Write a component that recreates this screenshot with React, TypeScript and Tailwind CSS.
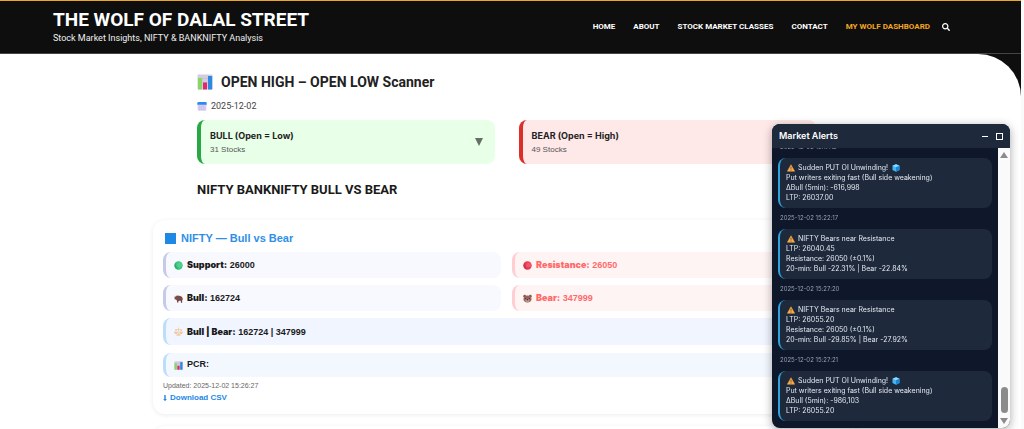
import type { ReactNode } from "react";
import { FaSearch } from "react-icons/fa";

const navLinks = ["Home", "About", "Stock Market Classes", "Contact"];

const alerts = [
  {
    time: "2025-12-02 15:17:12",
    title: "Sudden PUT OI Unwinding!",
    cube: true,
    lines: ["Put writers exiting fast (Bull side weakening)", "ΔBull (5min): -616,998", "LTP: 26037.00"],
  },
  {
    time: "2025-12-02 15:22:17",
    title: "NIFTY Bears near Resistance",
    cube: false,
    lines: ["LTP: 26040.45", "Resistance: 26050 (±0.1%)", "20-min: Bull -22.31% | Bear -22.84%"],
  },
  {
    time: "2025-12-02 15:27:20",
    title: "NIFTY Bears near Resistance",
    cube: false,
    lines: ["LTP: 26055.20", "Resistance: 26050 (±0.1%)", "20-min: Bull -29.85% | Bear -27.92%"],
  },
  {
    time: "2025-12-02 15:27:21",
    title: "Sudden PUT OI Unwinding!",
    cube: true,
    lines: ["Put writers exiting fast (Bull side weakening)", "ΔBull (5min): -986,103", "LTP: 26055.20"],
  },
];

function ChartIcon({ className }: { className: string }) {
  return (
    <svg viewBox="0 0 16 16" className={className} aria-hidden="true">
      <rect x="0.5" y="0.5" width="15" height="15" rx="1" fill="#d3cddb" />
      <path d="M1 4.5h14M1 8.5h14M1 12h14" stroke="#bdb5c9" strokeWidth="0.5" />
      <rect x="1" y="4" width="4" height="11.5" fill="#86d765" />
      <rect x="6" y="8.5" width="4" height="7" fill="#e3266f" />
      <rect x="11" y="2" width="4.2" height="13.5" fill="#2f88e0" />
    </svg>
  );
}

function CalendarIcon({ className }: { className: string }) {
  return (
    <svg viewBox="0 0 16 16" className={className} aria-hidden="true">
      <rect x="1" y="2" width="14" height="13.5" rx="1.5" fill="#d9d0f2" />
      <path d="M0.5 3.5a2 2 0 0 1 2-2h11a2 2 0 0 1 2 2V6H0.5z" fill="#2b8af0" />
      <path d="M3 8.5h10M3 11h10M3 13.5h10" stroke="#b9aee0" strokeWidth="1" strokeDasharray="2 1" />
    </svg>
  );
}

function BallIcon({ className }: { className: string }) {
  return (
    <svg viewBox="0 0 16 16" className={className} aria-hidden="true">
      <circle cx="8" cy="8" r="7.5" fill="currentColor" />
      <circle cx="10" cy="7" r="4.5" fill="#ffffff" opacity="0.15" />
      <path d="M2.500 3a7.500 7.500 0 0 0 6 12.400C5 13 3 9 2.500 3z" fill="#000000" opacity="0.15" />
    </svg>
  );
}

function BullIcon({ className }: { className: string }) {
  return (
    <svg viewBox="0 0 16 16" className={className} aria-hidden="true">
      <path
        d="M1 3.500l1 1.200L4.500 3l2-.5 4.500 1 3 1.500 1.500 3v3l-1-1v5h-2l-.5-3-4 .5-.3 2.500H6L5 11.500 4 10l-2.500-.5L.5 7 1.500 5.700z"
        fill="#7b4b48"
      />
      <path d="M6 11.500l.5 3.500H5.500zM14 11l.3 4H12z" fill="#5b3535" />
      <path d="M.6 3l1.600 1.500L4.500 3.500" fill="none" stroke="#c9b5a8" strokeWidth="0.8" />
    </svg>
  );
}

function BearIcon({ className }: { className: string }) {
  return (
    <svg viewBox="0 0 16 16" className={className} aria-hidden="true">
      <circle cx="3" cy="4" r="2.500" fill="#8a5a4c" />
      <circle cx="13" cy="4" r="2.500" fill="#8a5a4c" />
      <path d="M.8 9c0-4 3-6.500 7.200-6.500S15.200 5 15.200 9s-3 6-7.200 6S.8 13 .8 9z" fill="#94665a" />
      <ellipse cx="8" cy="11.500" rx="3.800" ry="3" fill="#bf9688" />
      <ellipse cx="8" cy="10" rx="1.600" ry="1" fill="#3a2430" />
      <circle cx="4.800" cy="8" r="0.900" fill="#3a2430" />
      <circle cx="11.200" cy="8" r="0.900" fill="#3a2430" />
    </svg>
  );
}

function ScalesIcon({ className }: { className: string }) {
  return (
    <svg viewBox="0 0 16 16" className={className} aria-hidden="true">
      <g fill="none" stroke="#f2bd86" strokeWidth="1">
        <path d="M8 1v12M2.500 4.500h11M3.500 4.500L1 10M3.500 4.500L6 10M12.500 4.500L10 10M12.500 4.500L15 10" />
      </g>
      <path
        d="M.5 9.500h6c0 2-1.300 2.800-3 2.800s-3-.8-3-2.800zM9.500 9.500h6c0 2-1.300 2.800-3 2.800s-3-.8-3-2.800zM4 15c0-1.500 2-2 4-2s4 .5 4 2z"
        fill="#f3bb80"
      />
    </svg>
  );
}

function WarningIcon({ className }: { className: string }) {
  return (
    <svg viewBox="0 0 16 16" className={className} aria-hidden="true">
      <path d="M8 1.500L15.300 14.500H.7z" fill="#f9ab44" stroke="#f9ab44" strokeWidth="1" strokeLinejoin="round" />
      <path d="M7.200 5.500h1.600l-.3 5h-1zM7.200 11.500h1.600V13H7.200z" fill="#4a3440" />
    </svg>
  );
}

function CubeIcon({ className }: { className: string }) {
  return (
    <svg viewBox="0 0 16 16" className={className} aria-hidden="true">
      <path d="M8 .5l7 3v8.500l-7 3.500-7-3.500V3.500z" fill="#45b4f5" />
      <path d="M8 .5l7 3-7 3-7-3z" fill="#8fdcff" />
      <path d="M8 6.500l7-3V12l-7 3.500z" fill="#1b86d8" />
    </svg>
  );
}

function ScannerCard({ title, count, className }: { title: string; count: string; className: string }) {
  return (
    <button
      type="button"
      aria-expanded="false"
      className={`flex min-w-0 flex-1 items-center justify-between rounded-lg border-l-4 py-2 pr-3 pl-[9px] text-left ${className}`}
    >
      <span className="flex flex-col">
        <span className="font-[Inter,sans-serif] text-[9px] leading-4 font-bold text-[#222]">{title}</span>
        <span className="font-['Liberation_Sans',sans-serif] text-[8px] leading-3 text-[#555]">{count}</span>
      </span>
      <svg viewBox="0 0 8 8" className="size-2 text-[#666f66]" aria-hidden="true">
        <path d="M0 0h8L4 8z" fill="currentColor" />
      </svg>
    </button>
  );
}

function StatRow({
  icon,
  label,
  value,
  className,
}: {
  icon: ReactNode;
  label: string;
  value: string;
  className: string;
}) {
  return (
    <div className={`flex items-center gap-1 rounded-lg border-l-3 px-2 text-[9px] leading-3 font-bold ${className}`}>
      {icon}
      <p>
        <span className="font-[Inter,sans-serif] font-black">{label}</span> {value}
      </p>
    </div>
  );
}

function Header() {
  return (
    <header className="flex items-center justify-between border-t border-b border-t-[#eba625] border-b-[#444] bg-[#0e0e0e] pt-2 pr-[71px] pb-2 pl-[53px] text-white">
      <div>
        <p className="text-[19px] leading-[22px] font-bold">THE WOLF OF DALAL STREET</p>
        <p className="text-[9px] leading-[14px] text-[#eee]">Stock Market Insights, NIFTY &amp; BANKNIFTY Analysis</p>
      </div>
      <nav className="flex items-center gap-[18px] text-[8px] leading-3 font-bold uppercase">
        {navLinks.map((link) => (
          <a key={link} href="#">
            {link}
          </a>
        ))}
        <a href="#" className="text-[#f5a623]">
          My Wolf Dashboard
        </a>
        <button type="button" aria-label="Search" className="-ml-[6px]">
          <FaSearch className="size-2" />
        </button>
      </nav>
    </header>
  );
}

function Scanner() {
  return (
    <section className="mx-auto max-w-[619px]">
      <h1 className="flex items-center gap-2 text-sm leading-5 font-bold text-[#222]">
        <ChartIcon className="size-4" />
        OPEN HIGH – OPEN LOW Scanner
      </h1>
      <p className="mt-2 flex items-center gap-1 text-[9px] leading-3 text-[#444]">
        <CalendarIcon className="size-[10px]" />
        2025-12-02
      </p>
      <div className="mt-2 flex gap-6">
        <ScannerCard title="BULL (Open = Low)" count="31 Stocks" className="border-[#28a745] bg-[#e8ffe8]" />
        <ScannerCard title="BEAR (Open = High)" count="49 Stocks" className="border-[#dc2f2a] bg-[#ffe8e8]" />
      </div>
      <h2 className="mt-4 text-[13px] leading-5 font-bold text-[#1a1a1a]">NIFTY BANKNIFTY BULL VS BEAR</h2>
    </section>
  );
}

function NiftyCard() {
  return (
    <section className="mx-auto mt-5 max-w-[707px] rounded-xl bg-white px-[10px] pt-3 pb-[10px] font-['Liberation_Sans',sans-serif] text-[#1a1a1a] shadow-[0_1px_5px_rgba(0,0,0,0.08)]">
      <h3 className="flex items-center gap-[5px] text-[11px] leading-3 font-bold text-[#2f8fe8]">
        <span className="ml-[2px] size-[11px] bg-[#1e88e5]" />
        NIFTY — Bull vs Bear
      </h3>
      <div className="mt-2 grid grid-cols-2 gap-x-[11px] gap-y-[7px]">
        <StatRow
          icon={<BallIcon className="size-[9px] text-[#34c77b]" />}
          label="Support:"
          value="26000"
          className="h-[26px] border-[#c5cae9] bg-[#f8f9ff]"
        />
        <StatRow
          icon={<BallIcon className="size-[9px] text-[#e83a55]" />}
          label="Resistance:"
          value="26050"
          className="h-[26px] border-[#ffcdd2] bg-[#fff4f4] text-[#ff6b6b]"
        />
        <StatRow
          icon={<BullIcon className="size-[9px]" />}
          label="Bull:"
          value="162724"
          className="h-[26px] border-[#c5cae9] bg-[#f8f9ff]"
        />
        <StatRow
          icon={<BearIcon className="size-[9px]" />}
          label="Bear:"
          value="347999"
          className="h-[26px] border-[#ffcdd2] bg-[#fff4f4] text-[#ff6b6b]"
        />
      </div>
      <StatRow
        icon={<ScalesIcon className="size-[9px]" />}
        label="Bull | Bear:"
        value="162724 | 347999"
        className="mt-[7px] h-[27px] border-[#bbdefb] bg-[#f0f5ff]"
      />
      <div className="mt-2 flex h-6 items-center gap-1 rounded-lg border-l-3 border-[#bbdefb] bg-[#f3f8ff] px-2 text-[9px] font-bold">
        <ChartIcon className="size-[9px]" />
        PCR:
      </div>
      <p className="mt-1 text-[7px] leading-[10px] text-[#666]">Updated: 2025-12-02 15:26:27</p>
      <a href="#" className="mt-px flex items-center gap-[3px] text-[8px] leading-3 font-bold text-[#1e88e5]">
        <svg viewBox="0 0 4 8" className="h-[7px] w-1" aria-hidden="true">
          <path d="M1.200 0h1.600v4.500H4L2 7 0 4.500h1.200z" fill="currentColor" />
        </svg>
        Download CSV
      </a>
    </section>
  );
}

function AlertsPanel() {
  return (
    <aside className="fixed top-[124px] right-[14px] bottom-px flex w-[238px] flex-col overflow-hidden rounded-lg bg-[#0f172a] font-[Inter,sans-serif] shadow-[0_2px_10px_rgba(0,0,0,0.35)]">
      <div className="flex h-6 shrink-0 items-center justify-between bg-[#1e293b] px-[7px] text-white">
        <h2 className="text-[9px] leading-3 font-semibold">Market Alerts</h2>
        <div className="flex items-center gap-2">
          <button type="button" aria-label="Minimize" className="flex size-[6px] items-center">
            <span className="h-px w-full bg-white" />
          </button>
          <button type="button" aria-label="Maximize" className="size-[7px] border border-white" />
        </div>
      </div>
      <div className="flex min-h-0 flex-1">
        <ul className="flex min-w-0 flex-1 flex-col justify-end overflow-hidden px-[6px] pb-[7px]">
          {alerts.map((alert) => (
            <li key={alert.time} className="shrink-0">
              <p className="px-[2px] pt-[5px] pb-[6px] text-[6px] leading-[10px] text-[#94a3b8]">{alert.time}</p>
              <div className="rounded-lg border-l-2 border-[#2ea3dc] bg-[#1e293b] px-[6px] py-[5px] text-[7px] leading-[10px] text-[#e2e8f0]">
                <p className="flex items-center gap-[3px]">
                  <WarningIcon className="ml-px size-2" />
                  {alert.title}
                  {alert.cube && <CubeIcon className="ml-px size-2" />}
                </p>
                {alert.lines.map((line) => (
                  <p key={line}>{line}</p>
                ))}
              </div>
            </li>
          ))}
        </ul>
        <div className="flex w-3 shrink-0 flex-col items-center bg-[#fafafa] py-1 text-[#8b8b8b]" aria-hidden="true">
          <svg viewBox="0 0 8 6" className="h-[6px] w-2">
            <path d="M4 0l4 6H0z" fill="currentColor" />
          </svg>
          <span className="mt-auto mb-[5px] h-[26px] w-[7px] rounded-full bg-[#8b8b8b]" />
          <svg viewBox="0 0 8 6" className="h-[6px] w-2">
            <path d="M0 0h8L4 6z" fill="currentColor" />
          </svg>
        </div>
      </div>
    </aside>
  );
}

export default function App() {
  return (
    <div className="h-screen overflow-hidden border-r-3 border-[#fafafa] bg-[#0e0e0e] font-[Roboto,sans-serif]">
      <Header />
      <main className="min-h-full rounded-tr-[43px] bg-white pt-[18px] pr-2">
        <Scanner />
        <NiftyCard />
        <div className="mx-auto mt-3 h-20 max-w-[707px] rounded-xl bg-white shadow-[0_1px_5px_rgba(0,0,0,0.08)]" />
      </main>
      <AlertsPanel />
    </div>
  );
}
